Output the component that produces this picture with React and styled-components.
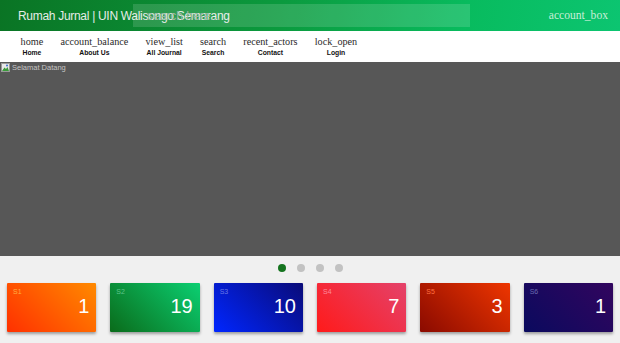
import React from "react";
import styled, { createGlobalStyle } from "styled-components";

const Global = createGlobalStyle`
  html, body {
    margin: 0;
    padding: 0;
    background: #f0f0f0;
    font-family: "Liberation Sans", Arial, sans-serif;
  }
`;

const Page = styled.div`
  width: 620px;
  height: 343px;
  overflow: hidden;
  background: #f0f0f0;
`;

const Header = styled.header`
  height: 31px;
  display: flex;
  align-items: center;
  background: linear-gradient(100deg, #0a7424 0%, #0b9a3e 45%, #08bb5e 75%, #0cc571 100%);
  padding: 0 12px 0 18px;
  box-sizing: border-box;
`;

const Brand = styled.div`
  font-size: 12px;
  letter-spacing: -0.3px;
  color: #e6ece8;
  white-space: nowrap;
  width: 0;
  overflow: visible;
`;

const Search = styled.input`
  margin-left: 115px;
  width: 337px;
  height: 23px;
  border: none;
  outline: none;
  background: rgba(255, 255, 255, 0.14);
  color: #fff;
  padding: 0 14px;
  box-sizing: border-box;
  font-family: "Liberation Sans", Arial, sans-serif;
  font-size: 12px;
  &::placeholder {
    color: #98b8a2;
    opacity: 1;
  }
`;

const Account = styled.div`
  margin-left: auto;
  font-family: "Liberation Serif", "Times New Roman", serif;
  font-size: 11.6px;
  color: #c8eed8;
`;

const Nav = styled.nav`
  height: 31px;
  background: #fff;
  display: flex;
  align-items: center;
  padding: 1px 11px 0 12px;
  box-sizing: border-box;
`;

const NavItem = styled.div`
  display: flex;
  flex-direction: column;
  align-items: center;
  padding: 0 8.6px;
  color: #222;
  cursor: pointer;
`;

const NavIcon = styled.span`
  font-family: "Liberation Serif", "Times New Roman", serif;
  font-size: 10.2px;
  line-height: 12px;
  color: #2a2a2a;
`;

const NavLabel = styled.span`
  font-size: 6.8px;
  font-weight: bold;
  line-height: 10px;
  color: #111;
`;

const Slider = styled.div`
  height: 194px;
  background: #575757;
  padding: 1px 0 0 1px;
  box-sizing: border-box;
`;

const Broken = styled.div`
  display: flex;
  align-items: center;
  gap: 2px;
  font-size: 7.5px;
  color: #c4c4c4;
`;

const Dots = styled.div`
  display: flex;
  justify-content: center;
  gap: 11px;
  padding: 8px 0 0 0;
  height: 19px;
  box-sizing: border-box;
  margin-left: 1px;
`;

const Dot = styled.span`
  width: 8px;
  height: 8px;
  border-radius: 50%;
  background: ${(p) => (p.$active ? "#15741f" : "#c2c2c2")};
`;

const Cards = styled.div`
  display: grid;
  grid-template-columns: repeat(6, 1fr);
  column-gap: 14px;
  padding: 8px 7px 0 7px;
`;

const Card = styled.div`
  height: 49px;
  background: linear-gradient(45deg, ${(p) => p.$from}, ${(p) => p.$to});
  box-shadow: 0 2px 3px rgba(0, 0, 0, 0.35);
  border-radius: 1px;
  display: flex;
  justify-content: space-between;
  padding: 5px 7px 0 6px;
  box-sizing: border-box;
  color: #fff;
`;

const CardLabel = styled.span`
  font-size: 7px;
  color: ${(p) => p.$tint};
`;

const CardValue = styled.span`
  font-size: 20px;
  margin-top: 7px;
  font-weight: 300;
`;

const navItems = [
  ["home", "Home"],
  ["account_balance", "About Us"],
  ["view_list", "All Journal"],
  ["search", "Search"],
  ["recent_actors", "Contact"],
  ["lock_open", "Login"],
];

const stats = [
  ["S1", 1, "#ff3000", "#ff8a00", "#ffae40"],
  ["S2", 19, "#0a6b1a", "#0bcf72", "#5fc48a"],
  ["S3", 10, "#0026ff", "#0a0b78", "#6a78e8"],
  ["S4", 7, "#ff1a1a", "#e4426a", "#ff8a9a"],
  ["S5", 3, "#8a0a00", "#ee3600", "#ff7040"],
  ["S6", 1, "#0a0a5e", "#32055e", "#6a6ab0"],
];

const BrokenIcon = () => (
  <svg width="9" height="9" viewBox="0 0 9 9">
    <rect x="0.5" y="0.5" width="8" height="8" fill="#e8e8e8" stroke="#9a9a9a" />
    <path d="M1 8 L3.5 4.5 L5 6 L6.5 4 L8 8 Z" fill="#3a9a3a" />
    <circle cx="6" cy="2.5" r="1" fill="#3a6ad0" />
  </svg>
);

export default function App() {
  return (
    <Page>
      <Global />
      <Header>
        <Brand>Rumah Jurnal | UIN Walisongo Semarang</Brand>
        <Search placeholder="search here..." />
        <Account>account_box</Account>
      </Header>
      <Nav>
        {navItems.map(([icon, label]) => (
          <NavItem key={label}>
            <NavIcon>{icon}</NavIcon>
            <NavLabel>{label}</NavLabel>
          </NavItem>
        ))}
      </Nav>
      <Slider>
        <Broken>
          <BrokenIcon />
          Selamat Datang
        </Broken>
      </Slider>
      <Dots>
        <Dot $active />
        <Dot />
        <Dot />
        <Dot />
      </Dots>
      <Cards>
        {stats.map(([label, value, from, to, tint]) => (
          <Card key={label} $from={from} $to={to}>
            <CardLabel $tint={tint}>{label}</CardLabel>
            <CardValue>{value}</CardValue>
          </Card>
        ))}
      </Cards>
    </Page>
  );
}
